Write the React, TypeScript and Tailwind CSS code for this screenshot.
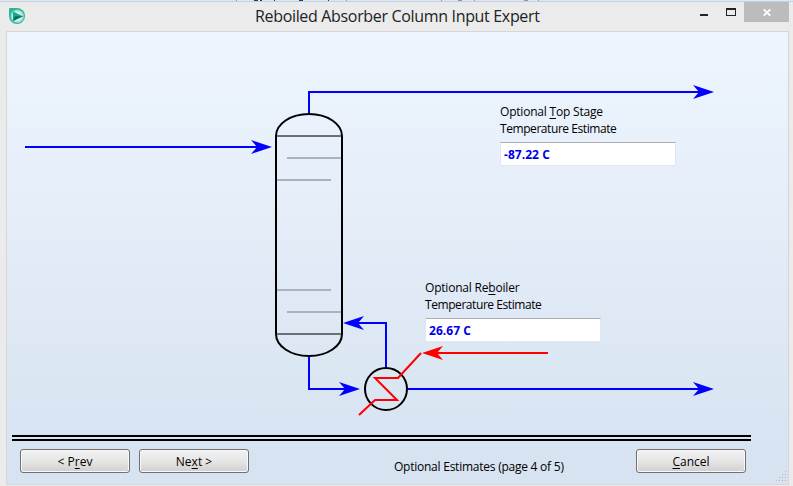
import React from 'react';

type Pt = [number, number];

function Arrow({ tip, left, color = '#0000ff' }: { tip: Pt; left?: boolean; color?: string }) {
  return (
    <path
      d="M0 0L-21 -7L-15 0L-21 7Z"
      fill={color}
      transform={`translate(${tip[0]} ${tip[1]})${left ? ' scale(-1 1)' : ''}`}
    />
  );
}

function AppIcon() {
  return (
    <svg width="16" height="16" viewBox="0 0 16 16">
      <defs>
        <radialGradient id="disc" cx="0.5" cy="0.5" r="0.5">
          <stop offset="0.5" stopColor="#e2f5ef" />
          <stop offset="0.8" stopColor="#a9dfd0" />
          <stop offset="1" stopColor="#4fc0a3" />
        </radialGradient>
      </defs>
      <path d="M0 1Q0 0 1 0H8A8 8 0 1 1 0 8Z" fill="#2fb594" />
      <circle cx="8.3" cy="8.3" r="7" fill="url(#disc)" />
      <path d="M4 3.500L14 8.300L4 13Z" fill="#18a88a" />
      <path d="M4 13L6 8.300H14Z" fill="#04705c" />
    </svg>
  );
}

function Diagram() {
  return (
    <svg className="block" width="781" height="403" viewBox="7 32 781 403" fill="none" strokeWidth="2">
      <g stroke="#0000ff">
        <path d="M25 147H260" />
        <path d="M309 114V92H702" />
        <path d="M309 356V389H348" />
        <path d="M386 368V323H355" />
        <path d="M407 389H702" />
      </g>
      <g stroke="#abb2b9">
        <path d="M287 158H342M276 180H331M276 290H331M287 312H342" />
      </g>
      <path d="M276 136H342M276 334H342" stroke="#6c7178" />
      <path
        d="M276 136C276 124 290.500 114 309 114S342 124 342 136V334C342 346 327.500 356 309 356S276 346 276 334Z"
        stroke="none"
      />
      <path
        d="M276 334V136C276 124 290.500 114 309 114S342 124 342 136V334C342 346 327.500 356 309 356S276 346 276 334Z"
        stroke="#000"
      />
      <circle cx="386" cy="389" r="21" stroke="#000" />
      <path d="M359 415L375 400H397L375 378H398L421 353" stroke="#ff0000" />
      <path d="M548 353H434" stroke="#ff0000" />
      <Arrow tip={[272, 147]} />
      <Arrow tip={[714, 92]} />
      <Arrow tip={[360, 389]} />
      <Arrow tip={[714, 389]} />
      <Arrow tip={[343, 323]} left />
      <Arrow tip={[422, 353]} left color="#ff0000" />
    </svg>
  );
}

function Key({ children }: { children: string }) {
  return <span className="underline decoration-1 underline-offset-2">{children}</span>;
}

function Estimate({ label, value }: { label: React.ReactNode; value: string }) {
  return (
    <div className="w-44">
      <div className="text-xs leading-[17px] whitespace-nowrap tracking-[-0.2px]">
        {label}
        <br />
        <span className="tracking-[-0.43px]">Temperature Estimate</span>
      </div>
      <div className="mt-[5px] flex h-6 items-center border border-[#e2e7ec] border-t-[#abadb3] bg-white pt-0.5 pl-[3px] text-xs font-bold tracking-[0.05px] text-[#0000e6]">
        {value}
      </div>
    </div>
  );
}

function Button({ children }: { children: React.ReactNode }) {
  return (
    <button className="flex h-6 w-[110px] items-center justify-center rounded-[3px] border border-[#707070] bg-linear-to-b from-[#f2f2f2] from-0% via-[#e6e6e6] via-50% to-[#cfcfcf] pt-px text-xs shadow-[inset_0_0_0_1px_#f8f8f8]">
      <span>{children}</span>
    </button>
  );
}

export default function App() {
  return (
    <div className="flex h-[486px] w-[793px] flex-col overflow-hidden bg-[#ebebeb] font-['Open_Sans','Noto_Sans',sans-serif] text-black">
      <div className="flex h-0.5 shrink-0 border-b border-[#c5d0dc] bg-[#dce8f5]">
        <div className="ml-[236px] h-px w-px bg-[#8a97a8]" />
        <div className="ml-[17px] h-px w-1 bg-[#263c68]" />
        <div className="ml-[2px] h-px w-0.5 bg-[#263c68]" />
        <div className="ml-[12px] h-px w-px bg-[#263c68]" />
        <div className="ml-[24px] h-px w-1 bg-[#263c68]" />
        <div className="ml-[25px] h-px w-px bg-[#263c68]" />
        <div className="ml-[17px] h-px w-px bg-[#8a97a8]" />
        <div className="ml-[94px] h-px w-px bg-[#8a97a8]" />
        <div className="ml-[16px] h-px w-1 bg-[#8a97a8]" />
        <div className="ml-[12px] h-px w-px bg-[#8a97a8]" />
        <div className="ml-[49px] h-px w-1 bg-[#8a97a8]" />
        <div className="ml-[10px] h-px w-px bg-[#8a97a8]" />
      </div>
      <header className="flex h-[29px] shrink-0 items-start pl-[9px]">
        <div className="mt-1.5">
          <AppIcon />
        </div>
        <h1 className="ml-[230px] w-[445px] pt-0.5 text-base leading-6 tracking-[-0.33px] whitespace-nowrap text-[#222]">
          Reboiled Absorber Column Input Expert
        </h1>
        <div className="mt-3 h-0.5 w-2 bg-[#222]" />
        <div className="mt-1.5 ml-[18px] h-2 w-2.5 border border-t-2 border-[#222]" />
        <div className="ml-2 flex h-5 w-[45px] items-center justify-center bg-[#bcbcbc]">
          <svg width="8" height="7" viewBox="0 0 8 7">
            <path d="M.7 .3L7.3 6.700M7.300 .3L.7 6.700" stroke="#fff" strokeWidth="1.800" />
          </svg>
        </div>
      </header>
      <main className="ml-1.5 flex h-[454px] w-[783px] shrink-0 flex-col border border-[#d6d6d6] bg-linear-to-b from-[#eef5fe] to-[#d7e3f1] to-95%">
        <section className="relative h-[403px] shrink-0">
          <Diagram />
          <div className="absolute top-[71px] left-[493px]">
            <Estimate label={<>Optional <Key>T</Key>op Stage</>} value="-87.22 C" />
          </div>
          <div className="absolute top-[247px] left-[418px]">
            <Estimate label={<>Optional Re<Key>b</Key>oiler</>} value="26.67 C" />
          </div>
        </section>
        <div className="ml-[5px] h-1.5 w-[739px] shrink-0 border-y-2 border-black" />
        <footer className="flex h-[43px] items-start pt-2 pl-[13px]">
          <Button>&lt; P<Key>r</Key>ev</Button>
          <div className="ml-[9px]">
            <Button>Ne<Key>x</Key>t &gt;</Button>
          </div>
          <div className="ml-[145px] w-[242px] pt-[9px] text-xs leading-[17px] tracking-[-0.24px] whitespace-nowrap">
            Optional Estimates (page 4 of 5)
          </div>
          <Button><Key>C</Key>ancel</Button>
          <svg className="mt-[22px] ml-[30px] shrink-0" width="11" height="12" viewBox="0 0 11 12">
            {[[9, 0], [6, 3], [9, 3], [3, 6], [6, 6], [9, 6], [0, 9], [3, 9], [6, 9], [9, 9]].map(([x, y]) => (
              <g key={`${x}-${y}`}>
                <rect x={x + 0.5} y={y + 0.5} width="1.500" height="1.500" fill="#fff" />
                <rect x={x} y={y} width="1.500" height="1.500" fill="#b4bfcb" />
              </g>
            ))}
          </svg>
        </footer>
      </main>
    </div>
  );
}
